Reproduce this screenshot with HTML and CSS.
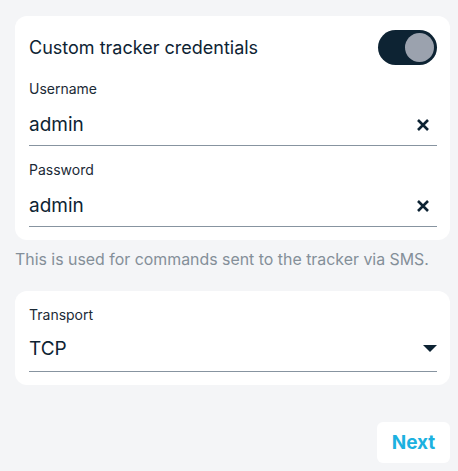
FILE: index.html
```html
<!DOCTYPE html>
<html lang="en">

<head>
    <meta charset="UTF-8">
    <title>Tracker setup</title>
    <link rel="stylesheet" href="styles.css">
</head>

<body>
    <div class="page">
        <div class="card">
            <div class="switch-row">
                <span class="switch-label">Custom tracker credentials</span>
                <span class="switch on"><span class="knob"></span></span>
            </div>
            <div class="field">
                <label class="field-label">Username</label>
                <div class="field-input">
                    <span class="value">admin</span>
                    <svg class="clear" width="14" height="14" viewBox="0 0 14 14">
                        <path d="M2 2L12 12M12 2L2 12" stroke="#0d2333" stroke-width="2.6" stroke-linecap="butt" />
                    </svg>
                </div>
            </div>
            <div class="field">
                <label class="field-label">Password</label>
                <div class="field-input">
                    <span class="value">admin</span>
                    <svg class="clear" width="14" height="14" viewBox="0 0 14 14">
                        <path d="M2 2L12 12M12 2L2 12" stroke="#0d2333" stroke-width="2.6" stroke-linecap="butt" />
                    </svg>
                </div>
            </div>
        </div>
        <p class="hint">This is used for commands sent to the tracker via SMS.</p>

        <div class="card card-select">
            <div class="field">
                <label class="field-label">Transport</label>
                <div class="field-input">
                    <span class="value">TCP</span>
                    <svg class="caret" width="14" height="8" viewBox="0 0 14 8">
                        <path d="M0 0H14L7 7Z" fill="#0d2333" />
                    </svg>
                </div>
            </div>
        </div>

        <div class="actions">
            <button class="btn-next">Next</button>
        </div>
    </div>
</body>

</html>
```

FILE: styles.css
```css
* {
    margin: 0;
    padding: 0;
    box-sizing: border-box;
}

body {
    background: #f4f5f7;
    font-family: Inter, "Noto Sans", sans-serif;
    color: #0d2333;
}

.page {
    padding: 16px 8px 8px 15px;
}

.card {
    background: #fff;
    border-radius: 12px;
    padding: 14px 13px 13px 14px;
}

.switch-row {
    display: flex;
    align-items: center;
    justify-content: space-between;
    height: 35px;
}

.switch-label {
    font-size: 18px;
}

.switch {
    width: 59px;
    height: 35px;
    border-radius: 18px;
    background: #0d2333;
    display: flex;
    align-items: center;
    justify-content: flex-end;
    padding: 3px;
}

.knob {
    width: 29px;
    height: 29px;
    border-radius: 50%;
    background: #9ba2ae;
}

.field {
    margin-top: 15px;
}

.field-label {
    display: block;
    font-size: 14px;
    line-height: 18px;
    color: #1b2a36;
}

.field-input {
    display: flex;
    align-items: center;
    justify-content: space-between;
    height: 48px;
    padding-top: 6px;
    border-bottom: 1.5px solid #8794a0;
}

.value {
    font-size: 19px;
}

.clear {
    margin-right: 7px;
}

.hint {
    margin: 10px 0 0;
    font-size: 15.9px;
    color: #848f99;
    line-height: 20px;
}

.card-select {
    margin-top: 21px;
    padding-top: 15px;
}

.card-select .field {
    margin-top: 0;
}

.card-select .field-input {
    padding-top: 2px;
}

.actions {
    display: flex;
    justify-content: flex-end;
    margin-top: 37px;
}

.btn-next {
    width: 73px;
    height: 41px;
    border: none;
    border-radius: 6px;
    background: #fff;
    color: #1cb1e0;
    font-family: Inter, "Noto Sans", sans-serif;
    font-weight: 700;
    font-size: 19px;
}
```
